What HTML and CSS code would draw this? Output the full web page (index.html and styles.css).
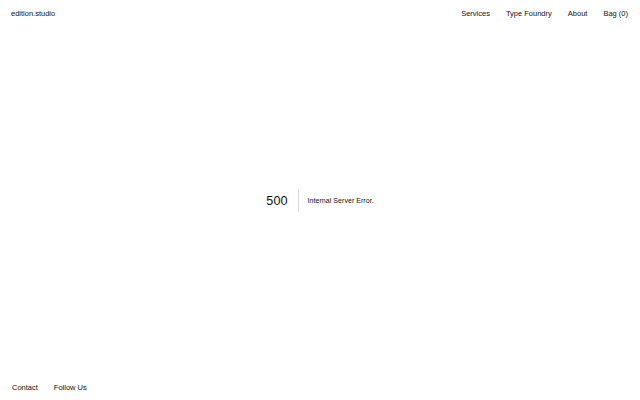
FILE: index.html
```html
<!DOCTYPE html>
<html lang="en">
<head>
    <meta charset="UTF-8">
    <meta name="viewport" content="width=device-width, initial-scale=1.0">
    <title>500 - edition.studio</title>
    <link rel="stylesheet" href="styles.css">
</head>
<body>
    <div class="page">
        <header class="header">
            <a class="logo" href="#">edition.studio</a>
            <nav class="nav">
                <a href="#">Services</a>
                <a href="#">Type Foundry</a>
                <a href="#">About</a>
                <a href="#">Bag (0)</a>
            </nav>
        </header>

        <main class="error">
            <span class="error-code">500</span>
            <span class="error-divider"></span>
            <span class="error-text">Internal Server Error.</span>
        </main>

        <footer class="footer">
            <a href="#">Contact</a>
            <a href="#">Follow Us</a>
        </footer>
    </div>
</body>
</html>
```

FILE: styles.css
```css
* {
    margin: 0;
    padding: 0;
    box-sizing: border-box;
}

body {
    font-family: "Liberation Sans", Arial, sans-serif;
    background-color: #fff;
    color: #111;
}

a {
    color: inherit;
    text-decoration: none;
}

.page {
    height: 400px;
    display: flex;
    flex-direction: column;
}

/* Cabecera */
.header {
    height: 26px;
    padding: 0 12px 0 11px;
    display: flex;
    justify-content: space-between;
    align-items: center;
    font-size: 7.5px;
}

.nav {
    display: flex;
    gap: 16px;
}

/* Mensaje de error */
.error {
    flex: 1;
    display: flex;
    justify-content: center;
    align-items: center;
    padding-top: 1px;
}

.error-code {
    font-size: 12.6px;
    letter-spacing: 0.1px;
}

.error-divider {
    width: 1px;
    height: 23px;
    background-color: #ddd;
    margin: 0 9px 0 10px;
}

.error-text {
    font-size: 7px;
    letter-spacing: 0.05px;
}

/* Pie */
.footer {
    height: 26px;
    padding: 0 12px;
    display: flex;
    gap: 16px;
    align-items: center;
    font-size: 7.5px;
}
```
